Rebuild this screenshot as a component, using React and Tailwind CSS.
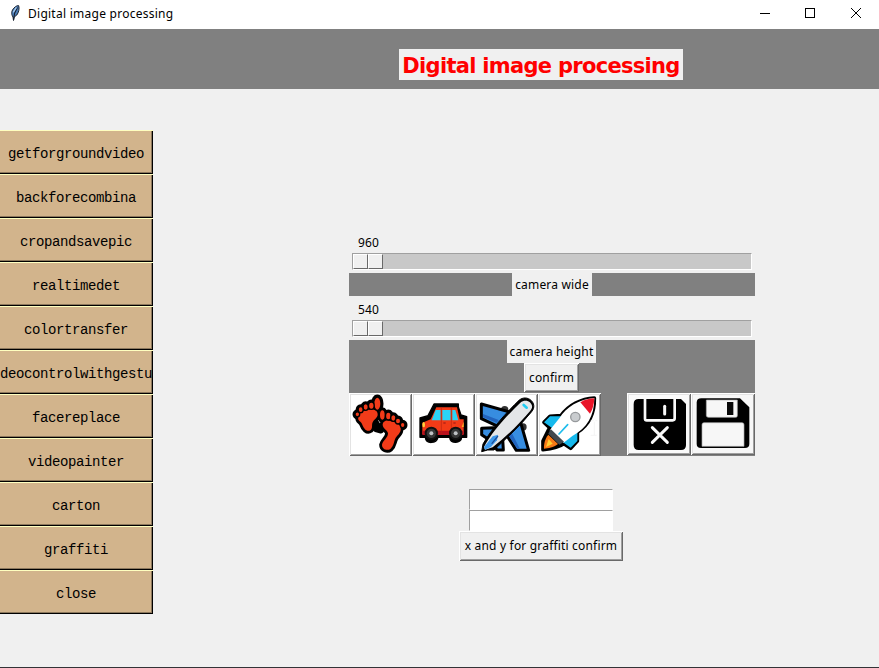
const ui = "font-['Noto_Sans','Open_Sans',sans-serif] text-[12px] leading-[16px] tracking-[0.18px] text-black";
const raised =
  'shadow-[inset_1px_1px_0_#fff,inset_-1px_-1px_0_#696969,inset_2px_2px_0_#e3e3e3,inset_-2px_-2px_0_#a0a0a0]';

const actions = [
  'getforgroundvideo',
  'backforecombina',
  'cropandsavepic',
  'realtimedet',
  'colortransfer',
  'deocontrolwithgestu',
  'facereplace',
  'videopainter',
  'carton',
  'graffiti',
  'close',
];

function TitleBar() {
  return (
    <header className="flex h-[29px] shrink-0 items-center bg-white">
      <svg className="mb-[3px] ml-[9px] h-[18px] w-[12px] shrink-0" viewBox="0 0 12 18">
        <path d="M4.5 16.5 4 13C1.8 10 2.6 6.3 5 4 6.700 2.200 8.700 1.300 9.700 1.700 10.600 4.500 9.700 8.500 7.800 11L5.200 13Z" fill="#4a7db8" stroke="#1c2430" strokeWidth="1" />
        <path d="M8.500 3.500 5.700 9 4.500 16" fill="none" stroke="#182030" strokeWidth="1.100" />
        <path d="M7.400 3.400 4.200 8.400" stroke="#a9cdf0" strokeWidth="1.200" />
      </svg>
      <span className="mb-[2px] ml-[7px] font-['Noto_Sans','Open_Sans',sans-serif] text-[12px] leading-[16px] tracking-[0.26px] whitespace-nowrap text-black">Digital image processing</span>
      <svg className="mb-[3px] ml-auto mr-[17px] h-[12px] w-[102px]" viewBox="0 0 102 12" fill="none" stroke="#000" shapeRendering="crispEdges">
        <path d="M0 6.500H10" />
        <rect x="45.500" y="1.500" width="9" height="9" />
        <path d="M91 1 101 11M101 1 91 11" shapeRendering="auto" />
      </svg>
    </header>
  );
}

function Sidebar() {
  return (
    <nav className="mt-[41px] flex w-[153px] shrink-0 flex-col">
      {actions.map((name) => (
        <button
          key={name}
          className="flex h-[44px] w-full items-center justify-center bg-[#d2b48c] pt-[3px] pr-px font-['Liberation_Mono',monospace] text-[14px] leading-[18px] tracking-[-0.4px] text-black shadow-[inset_0_1px_0_#ffffc0,inset_-1px_-1px_0_#000,inset_-2px_-2px_0_#8c785d]"
        >
          {name}
        </button>
      ))}
    </nav>
  );
}

function Scale({ value }) {
  return (
    <div className="flex flex-col px-[3px]">
      <span className={`${ui} h-[18px] w-[33px] pt-px text-center`}>{value}</span>
      <div className="mt-px h-[17px] w-[400px] border border-t-[#a0a0a0] border-r-white border-b-white border-l-[#a0a0a0] bg-[#c8c8c8]">
        <div className="flex h-[15px] w-[30px] shadow-[inset_1px_1px_0_#fff,inset_-1px_-1px_0_#696969] bg-[#f0f0f0]">
          <div className="w-[15px] border border-t-white border-r-[#696969] border-b-[#696969] border-l-white" />
          <div className="w-[15px] border border-t-white border-r-[#696969] border-b-[#696969] border-l-white" />
        </div>
      </div>
    </div>
  );
}

const toes = [
  [97, 41, 10, 19],
  [79, 47, 7.5, 10],
  [62, 51, 7, 9],
  [47, 59, 6.5, 8],
  [37, 73, 6, 6.5],
  [112, 75, 8, 15],
  [130, 78, 7.5, 11],
  [145, 84, 7, 9],
  [159, 93, 7, 8],
  [173, 105, 6, 7],
];

function Feet() {
  const leftSole =
    'M40 82C44 64 60 58 76 59 90 57 99 64 98 75 97 84 87 88 83 97 79 106 84 114 77 120 66 128 56 116 51 102 48 93 37 94 40 82Z';
  const rightSole =
    'M167 115C166 102 153 97 138 94 126 88 113 93 113 105 114 117 128 120 129 130 129 144 113 152 111 164 111 178 127 184 137 176 146 168 146 158 150 148 155 136 169 130 167 115Z';
  return (
    <svg className="h-[63px] w-[63px]" viewBox="12 9 189 189">
      <g fill="#000" stroke="#000" strokeWidth="17" strokeLinejoin="round">
        <path d={leftSole} />
        <path d={rightSole} />
        <path d="M92 95 108 122 92 118Z" />
        {toes.map(([cx, cy, rx, ry]) => (
          <ellipse key={cx} cx={cx} cy={cy} rx={rx} ry={ry} />
        ))}
      </g>
      <g fill="#f23b19">
        <path d={leftSole} />
        <path d={rightSole} />
        <g stroke="#000" strokeWidth="4">
          {toes.map(([cx, cy, rx, ry]) => (
            <ellipse key={cx} cx={cx} cy={cy} rx={rx + 1} ry={ry + 1} />
          ))}
        </g>
      </g>
    </svg>
  );
}

function Car() {
  return (
    <svg className="h-[63px] w-[63px]" viewBox="201 9 189 189">
      <path d="M267 42H340V51L348 75 365 80V142H350C349 162 316 162 314 142H279C274 162 243 163 241 142H225V84L249 77Z" fill="#000" stroke="#000" strokeWidth="4" strokeLinejoin="round" />
      <path d="M274 52H336L344 88H356V132H232V98L257 88Z" fill="#f33b17" />
      <path d="M232 122H356V135H232Z" fill="#b9101c" />
      <path d="M272 60H287V91H260ZM292 60H317V91H292ZM322 60H331L340 91H322Z" fill="#2bd4f6" />
      <path d="M289 54V132M319 54V132" stroke="#b72514" strokeWidth="2" />
      <path d="M295 99H302M325 99H332" stroke="#901919" strokeWidth="3" />
      <ellipse cx="236" cy="104" rx="4" ry="8" fill="#ffd33c" />
      <path d="M356 95V111H350Z" fill="#ffb326" />
      <g fill="#383838" stroke="#111" strokeWidth="6">
        <circle cx="259" cy="130" r="17" />
        <circle cx="332" cy="130" r="17" />
      </g>
      <g fill="#bfc2c5"><circle cx="259" cy="130" r="6" /><circle cx="332" cy="130" r="6" /></g>
    </svg>
  );
}

function Plane() {
  return (
    <svg className="h-[63px] w-[63px]" viewBox="15 9 189 189">
      <circle cx="104" cy="59" r="11" fill="#333" />
      <circle cx="159" cy="111" r="11" fill="#333" />
      <g stroke="#000" strokeWidth="9" strokeLinejoin="round" fill="#378de0">
        <path d="M34 42 120 66 90 112 34 86Z" />
        <path d="M150 91 176 181H139L104 126Z" />
        <path d="M35 115 72 113 98 146 100 180H81L66 155 35 134Z" />
      </g>
      <path d="M39 72 86 90 80 98 39 82ZM124 126 150 177H142L114 134Z" fill="#2364bd" />
      <path d="M53 180 35 185 39 162C65 115 110 67 147 31 171 10 206 40 185 65 151 107 107 147 72 180Z" fill="#000" stroke="#000" strokeWidth="3" />
      <path d="M42 171C65 126 112 76 151 38 171 21 198 44 181 62 147 103 105 143 68 172L45 179Z" fill="#e4e6e8" />
      <path d="M42 171 68 139 84 134 81 151 62 172 45 179Z" fill="#3d99ed" />
      <path d="M66 160 83 139" stroke="#194d9a" strokeWidth="4" strokeLinecap="round" />
      <path d="M161 45 170 53" stroke="#21cdf3" strokeWidth="8" strokeLinecap="round" />
    </svg>
  );
}

function Rocket() {
  return (
    <svg className="h-[63px] w-[63px]" viewBox="204 9 189 189">
      <g fill="#000" stroke="#000" strokeWidth="11" strokeLinejoin="round">
        <path d="M373 24C333 26 296 46 273 77L240 79 222 97 239 113 219 153 219 179C240 177 265 174 282 161L302 175 322 153V127C354 106 374 70 373 24Z" />
      </g>
      <path d="M240 79H276L247 115 222 97ZM322 125V153L302 173 278 156Z" fill="#16b9ed" />
      <path d="M373 24C328 27 288 51 268 85L239 121 281 158 307 138C351 114 373 78 373 24Z" fill="#fff" />
      <path d="M331 37C347 28 360 25 373 25 372 41 369 57 360 71Z" fill="#e91428" />
      <path d="M242 117 282 155 268 164 235 131Z" fill="#43494e" />
      <path d="M235 134 264 162C250 173 235 175 222 176 221 163 225 145 235 134Z" fill="#f77917" />
      <path d="M236 147 248 161 228 171Z" fill="#ffce31" />
      <circle cx="316" cy="81" r="14" fill="#c9cccf" stroke="#96999c" strokeWidth="4" />
      <path d="M267 132 293 104" stroke="#20bdec" strokeWidth="5" strokeLinecap="round" />
      <path d="M362 92H371M376 92H382M373 95V135M362 136H380" stroke="#eeeeee" strokeWidth="2" />
    </svg>
  );
}

function DiscardDisk() {
  return (
    <svg className="h-[62px] w-[64px]" viewBox="81 24 192 186">
      <path d="M116 42H243L258 57V180Q258 195 243 195H116Q101 195 101 180V57Q101 42 116 42Z" fill="#000" />
      <path d="M135 42V101Q135 106 140 106H218Q224 106 224 100V42" fill="none" stroke="#fafafa" strokeWidth="8" />
      <path d="M194 64V87" stroke="#fafafa" strokeWidth="9" strokeLinecap="round" />
      <path d="M157 128 202 172M202 128 157 172" stroke="#fafafa" strokeWidth="9" strokeLinecap="round" />
    </svg>
  );
}

function SaveDisk() {
  return (
    <svg className="h-[62px] w-[64px]" viewBox="273 24 192 186">
      <path d="M304 40H420L448 67V176Q448 189 435 189H303Q290 189 290 176V53Q290 40 304 40Z" fill="#000" />
      <path d="M320 45H412V92Q412 97 407 97H325Q319 97 319 91V45Z" fill="#f7f7f7" stroke="#aaa" strokeWidth="2" />
      <rect x="381" y="51" width="19" height="39" fill="#080808" />
      <path d="M312 113H426Q432 113 432 119V184H306V119Q306 113 312 113Z" fill="#f7f7f7" stroke="#aaa" strokeWidth="2" />
    </svg>
  );
}

export default function App() {
  return (
    <div className="flex h-[668px] w-[879px] flex-col overflow-hidden bg-[#f0f0f0]">
      <TitleBar />
      <div className="flex h-[60px] shrink-0 bg-[#808080] pt-[20px] pl-[399px]">
        <h1 className="flex h-[31px] w-[284px] items-center justify-center bg-[#f0f0f0] pt-[2px] font-['DejaVu_Sans',sans-serif] text-[21px] leading-[26px] font-bold tracking-[-0.7px] whitespace-nowrap text-[#f00]">
          Digital image processing
        </h1>
      </div>
      <div className="flex h-[578px] shrink-0">
        <Sidebar />
        <main className="ml-[196px] flex w-[406px] flex-col pt-[145px]">
          <Scale value="960" />
          <div className="mt-[3px] flex h-[23px] justify-center bg-[#808080]">
            <span className={`${ui} w-[80px] bg-[#f0f0f0] pt-[4px] text-center whitespace-nowrap`}>camera wide</span>
          </div>
          <div className="mt-[5px]">
            <Scale value="540" />
          </div>
          <div className="mt-[3px] flex h-[116px] flex-col items-center bg-[#808080]">
            <span className={`${ui} mr-px h-[23px] w-[89px] bg-[#f0f0f0] pt-[4px] text-center whitespace-nowrap`}>camera height</span>
            <button className={`${ui} ${raised} mr-px mb-px h-[29px] w-[55px] shrink-0 bg-[#f0f0f0] pt-px`}>confirm</button>
            <div className="flex w-full">
              <button className={`${raised} h-[63px] w-[63px] bg-white`}><Feet /></button>
              <button className={`${raised} h-[63px] w-[63px] bg-white`}><Car /></button>
              <button className={`${raised} h-[63px] w-[63px] bg-white`}><Plane /></button>
              <button className={`${raised} h-[63px] w-[63px] bg-white`}><Rocket /></button>
              <button className={`${raised} ml-[26px] h-[62px] w-[64px] bg-[#fafafa]`}><DiscardDisk /></button>
              <button className={`${raised} h-[62px] w-[64px] bg-[#f7f7f7]`}><SaveDisk /></button>
            </div>
          </div>
          <div className="mt-[33px] ml-[110px] flex w-[164px] flex-col items-center">
            <input aria-label="x" className="h-[21px] w-[144px] border border-t-[#a0a0a0] border-r-white border-b-white border-l-[#a0a0a0] bg-white" />
            <input aria-label="y" className="h-[21px] w-[144px] border border-t-[#a0a0a0] border-r-white border-b-white border-l-[#a0a0a0] bg-white" />
            <button className={`${ui} ${raised} h-[30px] w-[164px] bg-[#f0f0f0] whitespace-nowrap`}>x and y for graffiti confirm</button>
          </div>
        </main>
      </div>
      <div className="h-px shrink-0 bg-[#333336]" />
    </div>
  );
}
